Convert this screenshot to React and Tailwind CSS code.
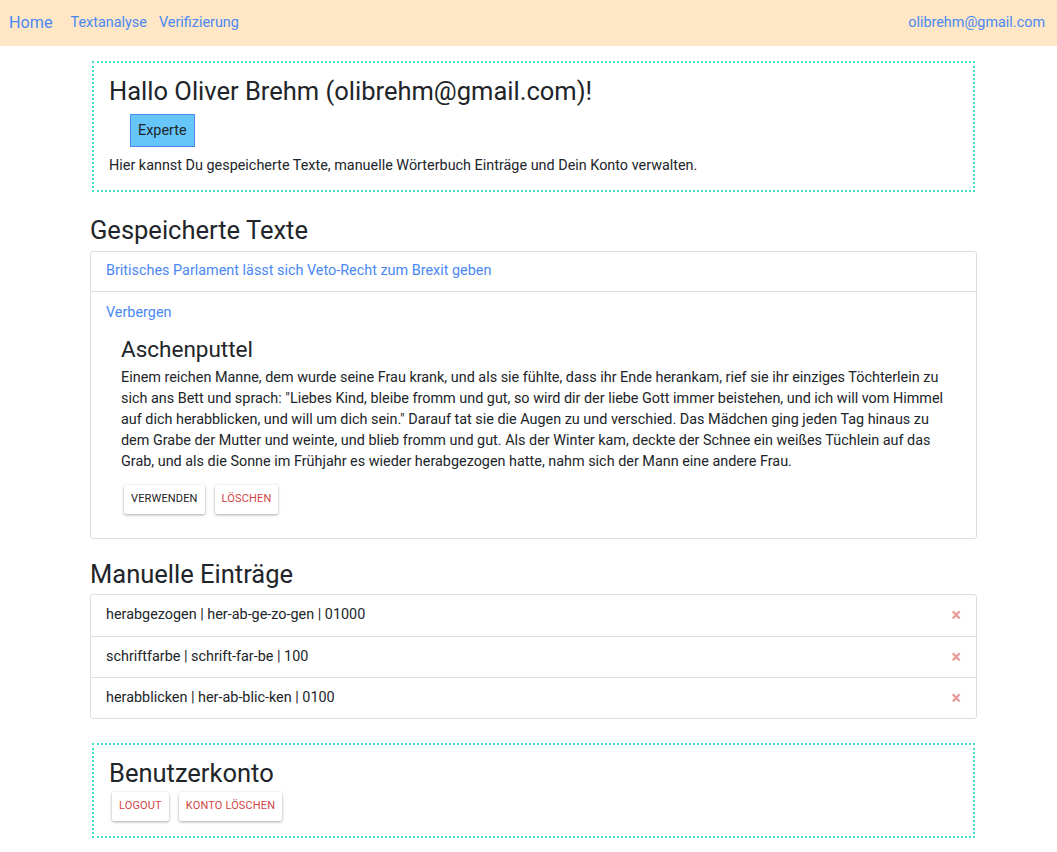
import React from 'react';

// Simple account overview page
const entries = [
  'herabgezogen | her-ab-ge-zo-gen | 01000',
  'schriftfarbe | schrift-far-be | 100',
  'herabblicken | her-ab-blic-ken | 0100',
];

function FlatButton({ children, danger }) {
  return (
    <button
      className={`h-[29px] px-[7px] bg-white rounded-[2px] shadow-[0_1px_3px_rgba(0,0,0,0.35)] text-[11px] uppercase tracking-[0.15px] ${danger ? 'text-[#d14545]' : 'text-[#222]'}`}
    >
      {children}
    </button>
  );
}

export default function App() {
  return (
    <div className="min-h-screen bg-white text-[#212529] font-['Roboto',sans-serif]">
      <nav className="h-[46px] bg-[#ffe6c4] flex items-center px-[9px] text-[#4a88f5]">
        <a className="text-[16.2px] mr-[18px]">Home</a>
        <a className="text-[14.4px] mr-[12px]">Textanalyse</a>
        <a className="text-[14.4px]">Verifizierung</a>
        <a className="text-[14.4px] ml-auto mr-[3px]">olibrehm@gmail.com</a>
      </nav>

      <main className="ml-[90px] w-[887px] pt-[15px] pb-[15px]">
        <section className="mx-[2px] border-2 border-dotted border-[#3fe0cc] px-[15px] pt-[12px] pb-[13px]">
          <h1 className="text-[25.5px] leading-[32px]">Hallo Oliver Brehm (olibrehm@gmail.com)!</h1>
          <button className="mt-[7px] ml-[21px] h-[33px] px-[7px] bg-[#66c6fa] border border-[#4a88f5] text-[14.4px]">
            Experte
          </button>
          <p className="mt-[8px] text-[14.4px]">
            Hier kannst Du gespeicherte Texte, manuelle Wörterbuch Einträge und Dein Konto verwalten.
          </p>
        </section>

        <h2 className="mt-[22px] text-[25.5px] leading-[32px]">Gespeicherte Texte</h2>
        <div className="mt-[5px] border border-[#dedede] rounded-[3px]">
          <div className="h-[40px] flex items-center px-[15px] border-b border-[#dedede] text-[14.4px] text-[#4a88f5]">
            Britisches Parlament lässt sich Veto-Recht zum Brexit geben
          </div>
          <div className="px-[15px] pt-[8px] pb-[24px]">
            <a className="text-[14.4px] text-[#4a88f5]">Verbergen</a>
            <div className="pl-[15px] pt-[12px]">
              <h3 className="text-[22.5px] leading-[26px]">Aschenputtel</h3>
              <p className="mt-[5px] text-[14.4px] leading-[21px] pr-[10px]">
                Einem reichen Manne, dem wurde seine Frau krank, und als sie fühlte, dass ihr Ende herankam, rief sie ihr einziges Töchterlein zu sich ans Bett und sprach: "Liebes Kind, bleibe fromm und gut, so wird dir der liebe Gott immer beistehen, und ich will vom Himmel auf dich herabblicken, und will um dich sein." Darauf tat sie die Augen zu und verschied. Das Mädchen ging jeden Tag hinaus zu dem Grabe der Mutter und weinte, und blieb fromm und gut. Als der Winter kam, deckte der Schnee ein weißes Tüchlein auf das Grab, und als die Sonne im Frühjahr es wieder herabgezogen hatte, nahm sich der Mann eine andere Frau.
              </p>
              <div className="mt-[13px] ml-[3px] flex gap-[10px]">
                <FlatButton>Verwenden</FlatButton>
                <FlatButton danger>Löschen</FlatButton>
              </div>
            </div>
          </div>
        </div>

        <h2 className="mt-[19px] text-[25.5px] leading-[32px]">Manuelle Einträge</h2>
        <ul className="mt-[4px] border border-[#dedede] rounded-[3px]">
          {entries.map((entry, i) => (
            <li
              key={i}
              className={`h-[41px] flex items-center px-[15px] text-[14.4px] ${i > 0 ? 'border-t border-[#dedede]' : ''}`}
            >
              <span>{entry}</span>
              <span className="ml-auto mr-0 text-[#e89a9a] text-[18px] font-bold leading-none">×</span>
            </li>
          ))}
        </ul>

        <section className="mt-[24px] mx-[2px] border-2 border-dotted border-[#3fe0cc] px-[15px] pt-[12px] pb-[15px]">
          <h2 className="text-[25.5px] leading-[32px]">Benutzerkonto</h2>
          <div className="mt-[3px] ml-[3px] flex gap-[10px]">
            <FlatButton danger>Logout</FlatButton>
            <FlatButton danger>Konto löschen</FlatButton>
          </div>
        </section>
      </main>
    </div>
  );
}
